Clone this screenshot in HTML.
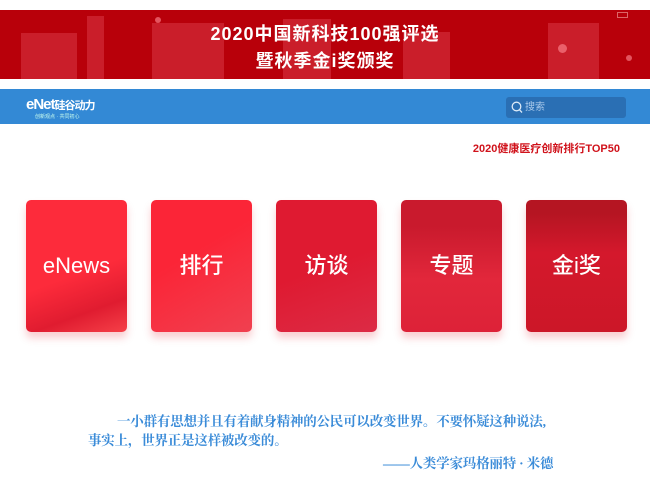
<!DOCTYPE html>
<html><head><meta charset="utf-8"><style>
*{margin:0;padding:0;box-sizing:border-box}
body{width:650px;height:500px;background:#fff;position:relative;overflow:hidden;font-family:"Liberation Sans","Noto Sans CJK SC",sans-serif}
.banner{position:absolute;left:0;top:10px;width:650px;height:69px;background:#b8000a;overflow:hidden}
.bar{position:absolute;background:rgba(255,120,140,.25)}
.dot{position:absolute;border-radius:50%;background:rgba(255,140,150,.6)}
.bt{position:absolute;left:0;width:650px;text-align:center;color:#fff;font-weight:bold;font-size:18px;letter-spacing:1px}
.nav{position:absolute;left:0;top:89px;width:650px;height:35px;background:#3389d5}
.search{position:absolute;left:506px;top:8px;width:120px;height:21px;background:#2a6fb4;border-radius:3px;color:#a8c8ea;font-size:10px;line-height:21px;padding-left:19px}
.card{position:absolute;top:200px;width:101px;height:132px;border-radius:5px;color:#fff;font-size:22px;font-weight:500;text-align:center;line-height:132px;box-shadow:0 6px 8px rgba(230,60,70,.25);overflow:hidden}
.q{position:absolute;color:#3a8bd8;font-family:"Liberation Serif","Noto Serif CJK SC",serif;font-weight:bold;font-size:13.5px;white-space:nowrap;letter-spacing:-0.2px}
</style></head><body>
<div class="banner">
<div class="bar" style="left:21px;top:23px;width:56px;height:46px"></div>
<div class="bar" style="left:87px;top:6px;width:17px;height:63px"></div>
<div class="bar" style="left:152px;top:13px;width:72px;height:56px"></div>
<div class="bar" style="left:283px;top:9px;width:48px;height:60px"></div>
<div class="bar" style="left:403px;top:22px;width:47px;height:47px"></div>
<div class="bar" style="left:548px;top:13px;width:51px;height:56px"></div>
<div class="dot" style="left:155px;top:7px;width:6px;height:6px"></div>
<div class="dot" style="left:558px;top:34px;width:9px;height:9px"></div>
<div class="dot" style="left:626px;top:45px;width:6px;height:6px"></div>
<div style="position:absolute;left:617px;top:2px;width:11px;height:6px;border:1px solid #d66;"></div>
<div class="bt" style="top:10px">2020中国新科技100强评选</div>
<div class="bt" style="top:37px">暨秋季金i奖颁奖</div>
</div>
<div class="nav">
<div style="position:absolute;left:26px;top:7px;color:#fff;font-weight:bold;font-size:15px;letter-spacing:-1px">eNet<span style="font-size:11px">硅谷动力</span></div>
<div style="position:absolute;left:35px;top:24px;color:#cfe;font-size:5px">创新观点 · 共同初心</div>
<div class="search"><svg style="position:absolute;left:5px;top:4px" width="12" height="13"><circle cx="5.5" cy="5.5" r="4.3" stroke="#dbe9f7" stroke-width="1.3" fill="none"/><path d="M8.5 8.8L11 11.5" stroke="#dbe9f7" stroke-width="1.3"/></svg>搜索</div>
</div>
<div style="position:absolute;right:30px;top:140px;color:#d0121b;font-weight:bold;font-size:11px">2020健康医疗创新排行TOP50</div>
<div class="card" style="left:26px;background:linear-gradient(160deg,#fd2b3b 55%,#e01c30 80%,#f54048)">eNews</div>
<div class="card" style="left:151px;background:linear-gradient(150deg,#fb2537 40%,#f04050 100%)">排行</div>
<div class="card" style="left:276px;background:linear-gradient(160deg,#df1a31 50%,#dc2b45)">访谈</div>
<div class="card" style="left:401px;background:linear-gradient(180deg,#c91a2d 20%,#e2273b 60%,#dd2238)">专题</div>
<div class="card" style="left:526px;background:linear-gradient(180deg,#b51522 10%,#d4182c 40%,#cc1728)">金i奖</div>
<div class="q" style="left:117px;top:410px">一小群有思想并且有着献身精神的公民可以改变世界。不要怀疑这种说法,</div>
<div class="q" style="left:88px;top:429px">事实上，世界正是这样被改变的。</div>
<div class="q" style="left:383px;top:452px">——人类学家玛格丽特 · 米德</div>
</body></html>
